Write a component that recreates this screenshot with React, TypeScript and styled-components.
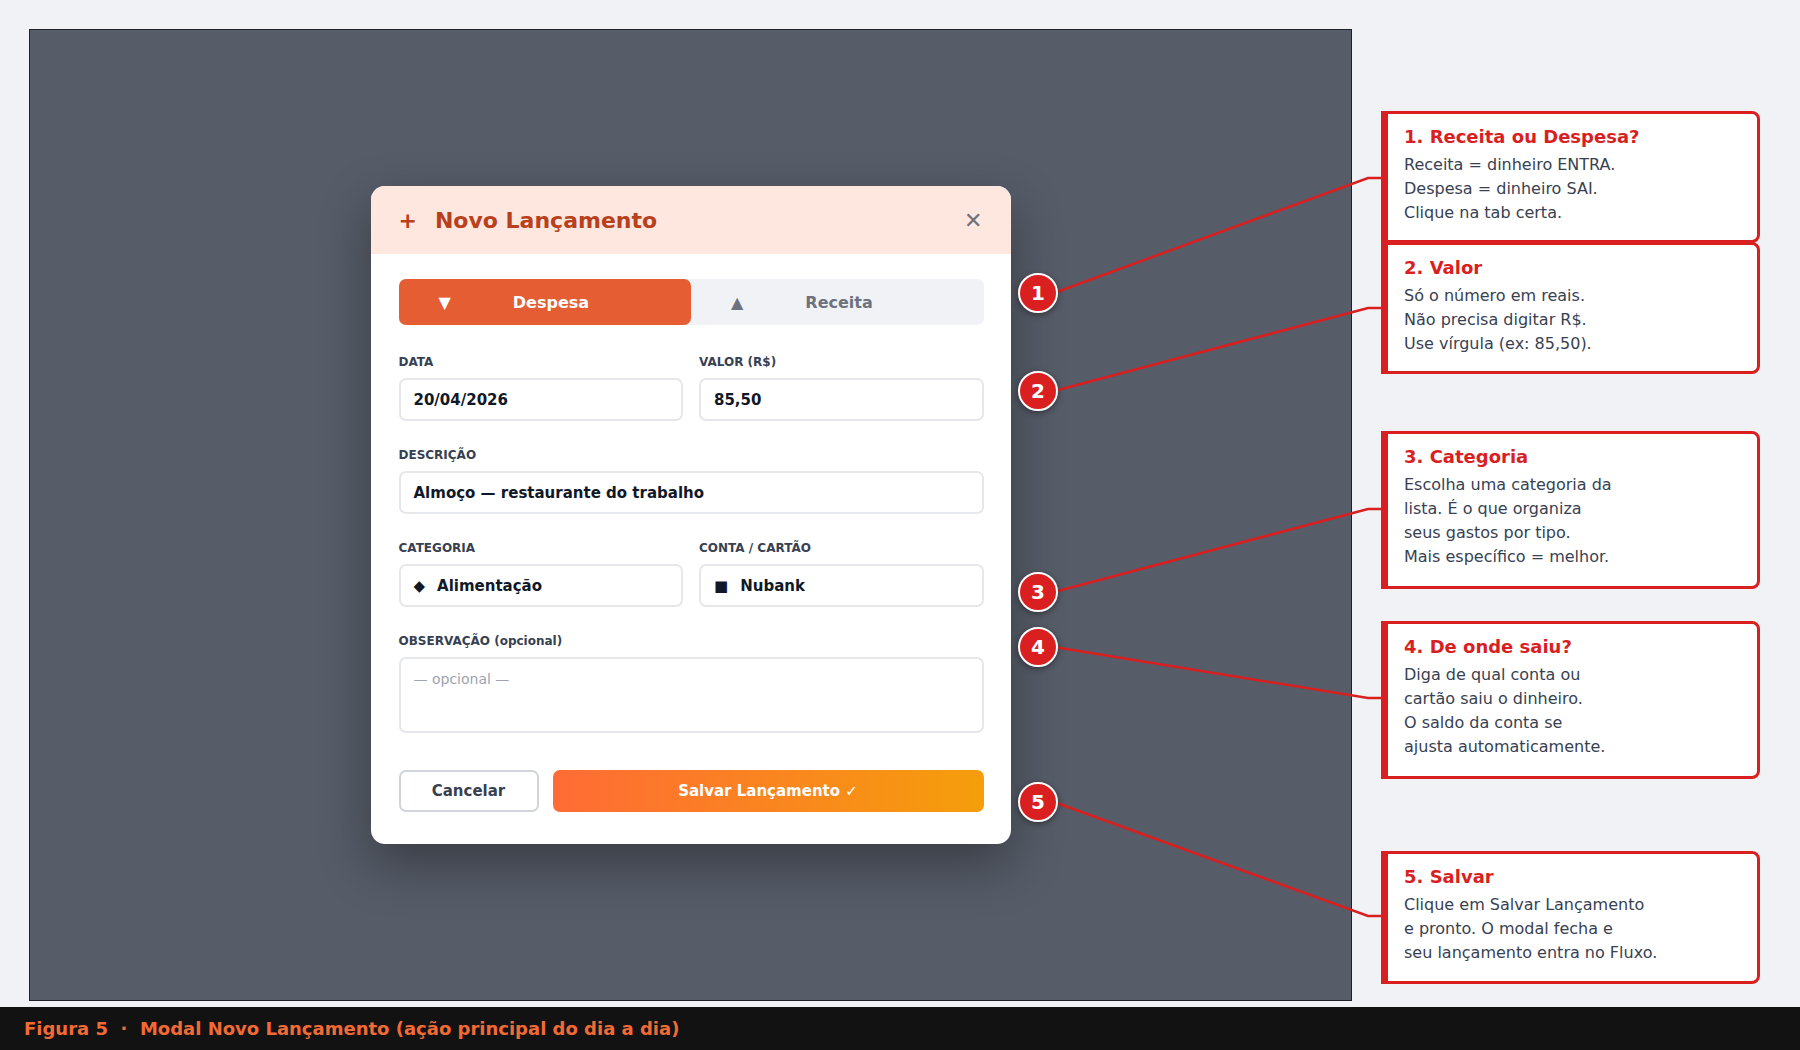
import React from 'react';
import styled, { createGlobalStyle } from 'styled-components';

const GlobalStyle = createGlobalStyle`
  body {
    margin: 0;
    background: #f0f2f5;
    font-family: 'DejaVu Sans', 'Noto Sans', sans-serif;
  }
`;

const Page = styled.div`
  width: 1800px;
  height: 1050px;
  display: flex;
  flex-direction: column;
`;

const Stage = styled.div`
  position: relative;
  flex: 1;
  padding: 29px 0 0 29px;
`;

const Frame = styled.div`
  width: 1321px;
  height: 970px;
  border: 1px solid #1f2124;
  background: #565c68;
  display: flex;
  align-items: center;
  justify-content: center;
`;

const Modal = styled.div`
  width: 640px;
  background: #ffffff;
  border-radius: 14px;
  overflow: hidden;
  box-shadow: 0 20px 50px rgba(0, 0, 0, 0.35);
`;

const Header = styled.div`
  height: 68px;
  background: #fde7df;
  display: flex;
  align-items: center;
  justify-content: space-between;
  padding: 0 28px;
`;

const Title = styled.h2`
  margin: 0;
  font-size: 22px;
  font-weight: 700;
  color: #b8401c;
  span {
    margin-right: 18px;
  }
`;

const Close = styled.span`
  font-size: 22px;
  color: #6b7280;
`;

const Body = styled.div`
  padding: 25px 27px 32px 28px;
  display: flex;
  flex-direction: column;
`;

const Tabs = styled.div`
  display: flex;
  height: 46px;
  background: #f1f2f5;
  border-radius: 7px;
  margin-bottom: 30px;
`;

const Tab = styled.div<{ $active?: boolean }>`
  flex: 1;
  display: flex;
  align-items: center;
  padding-left: 40px;
  gap: 62px;
  border-radius: 7px;
  font-size: 16px;
  font-weight: 700;
  background: ${(p) => (p.$active ? '#e55d33' : 'transparent')};
  color: ${(p) => (p.$active ? '#ffffff' : '#6b7280')};
`;

const Row = styled.div`
  display: flex;
  gap: 16px;
  margin-bottom: 27px;
`;

const Field = styled.div`
  flex: 1;
  display: flex;
  flex-direction: column;
`;

const Label = styled.label`
  font-size: 12px;
  font-weight: 700;
  color: #374151;
  margin-bottom: 9px;
`;

const Input = styled.div`
  height: 43px;
  box-sizing: border-box;
  border: 2px solid #e5e7eb;
  border-radius: 7px;
  padding: 0 13px;
  display: flex;
  align-items: center;
  gap: 12px;
  font-size: 15px;
  font-weight: 700;
  color: #111827;
`;

const TextArea = styled(Input)`
  height: 76px;
  align-items: flex-start;
  padding-top: 12px;
  font-weight: 400;
  font-size: 14px;
  color: #9ca3af;
`;

const Actions = styled.div`
  display: flex;
  gap: 14px;
  margin-top: 10px;
`;

const CancelBtn = styled.button`
  width: 140px;
  height: 42px;
  border: 2px solid #d1d5db;
  border-radius: 7px;
  background: #fff;
  font-family: inherit;
  font-size: 15px;
  font-weight: 700;
  color: #374151;
`;

const SaveBtn = styled.button`
  flex: 1;
  height: 42px;
  border: none;
  border-radius: 7px;
  background: linear-gradient(90deg, #ff6b35, #f59e0b);
  font-family: inherit;
  font-size: 15px;
  font-weight: 700;
  color: #fff;
`;

const Marker = styled.div<{ $y: number }>`
  position: absolute;
  left: 1018px;
  top: ${(p) => p.$y - 20}px;
  width: 36px;
  height: 36px;
  border-radius: 50%;
  border: 2px solid #fff;
  background: #d91f1f;
  color: #fff;
  font-size: 20px;
  font-weight: 700;
  display: flex;
  align-items: center;
  justify-content: center;
  box-shadow: 0 2px 6px rgba(0, 0, 0, 0.4);
`;

const Callout = styled.div<{ $y: number; $h: number }>`
  position: absolute;
  left: 1381px;
  top: ${(p) => p.$y}px;
  width: 379px;
  height: ${(p) => p.$h}px;
  box-sizing: border-box;
  background: #fff;
  border: 3px solid #d91f1f;
  border-left-width: 7px;
  border-radius: 0 8px 8px 0;
  padding: 12px 16px;
`;

const CalloutTitle = styled.div`
  font-size: 18px;
  font-weight: 700;
  color: #d91f1f;
  margin-bottom: 6px;
`;

const CalloutText = styled.div`
  font-size: 16px;
  line-height: 24px;
  color: #374151;
`;

const Lines = styled.svg`
  position: absolute;
  left: 0;
  top: 0;
  pointer-events: none;
`;

const Footer = styled.div`
  height: 43px;
  background: #121212;
  color: #f26a35;
  font-size: 18px;
  font-weight: 700;
  display: flex;
  align-items: center;
  padding-left: 24px;
`;

const callouts = [
  { y: 111, h: 132, n: 1, my: 293, title: '1. Receita ou Despesa?', lines: ['Receita = dinheiro ENTRA.', 'Despesa = dinheiro SAI.', 'Clique na tab certa.'] },
  { y: 242, h: 132, n: 2, my: 391, title: '2. Valor', lines: ['Só o número em reais.', 'Não precisa digitar R$.', 'Use vírgula (ex: 85,50).'] },
  { y: 431, h: 158, n: 3, my: 592, title: '3. Categoria', lines: ['Escolha uma categoria da', 'lista. É o que organiza', 'seus gastos por tipo.', 'Mais específico = melhor.'] },
  { y: 621, h: 158, n: 4, my: 647, title: '4. De onde saiu?', lines: ['Diga de qual conta ou', 'cartão saiu o dinheiro.', 'O saldo da conta se', 'ajusta automaticamente.'] },
  { y: 851, h: 133, n: 5, my: 802, title: '5. Salvar', lines: ['Clique em Salvar Lançamento', 'e pronto. O modal fecha e', 'seu lançamento entra no Fluxo.'] },
];

const anchorY = [178, 308, 509, 698, 916];

export default function App() {
  return (
    <Page>
      <GlobalStyle />
      <Stage>
        <Frame>
          <Modal>
            <Header>
              <Title>
                <span>+</span>Novo Lançamento
              </Title>
              <Close>✕</Close>
            </Header>
            <Body>
              <Tabs>
                <Tab $active>
                  <span>▼</span>Despesa
                </Tab>
                <Tab>
                  <span>▲</span>Receita
                </Tab>
              </Tabs>
              <Row>
                <Field>
                  <Label>DATA</Label>
                  <Input>20/04/2026</Input>
                </Field>
                <Field>
                  <Label>VALOR (R$)</Label>
                  <Input>85,50</Input>
                </Field>
              </Row>
              <Row>
                <Field>
                  <Label>DESCRIÇÃO</Label>
                  <Input>Almoço — restaurante do trabalho</Input>
                </Field>
              </Row>
              <Row>
                <Field>
                  <Label>CATEGORIA</Label>
                  <Input>
                    <span>◆</span>Alimentação
                  </Input>
                </Field>
                <Field>
                  <Label>CONTA / CARTÃO</Label>
                  <Input>
                    <span>■</span>Nubank
                  </Input>
                </Field>
              </Row>
              <Row>
                <Field>
                  <Label>OBSERVAÇÃO (opcional)</Label>
                  <TextArea>— opcional —</TextArea>
                </Field>
              </Row>
              <Actions>
                <CancelBtn>Cancelar</CancelBtn>
                <SaveBtn>Salvar Lançamento ✓</SaveBtn>
              </Actions>
            </Body>
          </Modal>
        </Frame>
        <Lines width="1800" height="1007">
          {callouts.map((c, i) => (
            <polyline
              key={c.n}
              points={`1054,${c.my} 1368,${anchorY[i]} 1381,${anchorY[i]}`}
              fill="none"
              stroke="#d91f1f"
              strokeWidth="2.5"
            />
          ))}
        </Lines>
        {callouts.map((c) => (
          <Marker key={c.n} $y={c.my}>
            {c.n}
          </Marker>
        ))}
        {callouts.map((c) => (
          <Callout key={c.n} $y={c.y} $h={c.h}>
            <CalloutTitle>{c.title}</CalloutTitle>
            <CalloutText>
              {c.lines.map((l) => (
                <div key={l}>{l}</div>
              ))}
            </CalloutText>
          </Callout>
        ))}
      </Stage>
      <Footer>Figura 5 &nbsp;·&nbsp; Modal Novo Lançamento (ação principal do dia a dia)</Footer>
    </Page>
  );
}
